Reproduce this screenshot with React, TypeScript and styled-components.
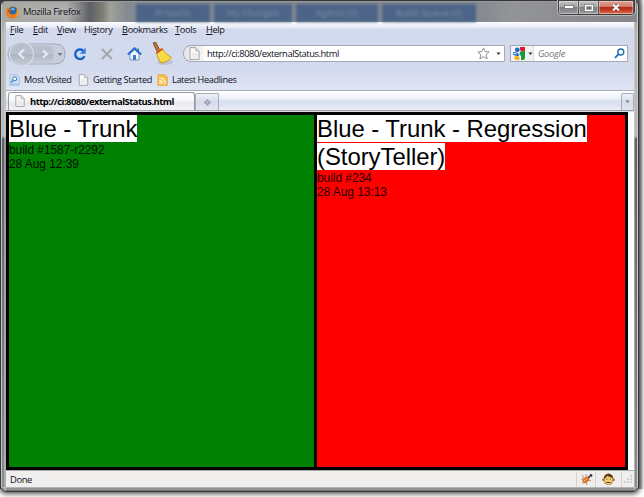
import React from "react";
import styled, { createGlobalStyle } from "styled-components";

const GlobalStyle = createGlobalStyle`
  html, body { margin: 0; padding: 0; }
  body { width: 644px; height: 497px; overflow: hidden; background: #fff; }
  * { box-sizing: border-box; }
`;

const Desktop = styled.div`
  width: 644px;
  height: 497px;
  overflow: hidden;
  background: linear-gradient(90deg, #30303a 0 7px, #555 7px 638px, #666 639px, #fff 644px);
  background-size: 100% 489px;
  background-repeat: no-repeat;
  font-family: "Open Sans", "Noto Sans", sans-serif;
  font-size: 9.4px;
  color: #101018;
`;

const Window = styled.div`
  width: 639px;
  height: 492px;
  display: flex;
  flex-direction: column;
  padding: 0 4px 4px 5px;
  border-radius: 6px;
  border: 1px solid #35363a;
  box-shadow: 0 1px 5px 1px #555;
  background:
    linear-gradient(90deg, #c4c4c4 0 1px, transparent 1px 3px, #d0d0d0 4px, transparent 5px),
    linear-gradient(270deg, #ccc 0 1px, transparent 1px 3px, #d8d8d8 3px, transparent 4px),
    linear-gradient(0deg, #777 0 1px, #8f9093 1px 3px, #d8d8d8 3px, transparent 4px),
    linear-gradient(180deg, #939496 0, #b6b9b1 36px, #b9b9b7 135px, #606165 138px, #8c8d8f 100%);
`;

const TitleBar = styled.header`
  height: 21px;
  flex: none;
  display: flex;
  align-items: center;
  margin: 0 -3px 0 -4px;
  padding-left: 4px;
  position: relative;
  border-top: 1px solid #999;
  border-radius: 5px 5px 0 0;
  background: linear-gradient(90deg, #a8a99f 0, #aaa 65px, #5e6064 88px, #7e8076 101px, #a1a398 108px, #858b92 124px, #858b92 480px, #939497 510px, #858789 100%);
`;

const TitleText = styled.span`
  position: relative;
  margin-left: 4px;
  line-height: 18px;
  letter-spacing: -0.38px;
  white-space: nowrap;
  text-shadow: 0 0 5px #ddd;
`;

const GlassTabs = styled.div`
  position: absolute;
  left: 134px;
  top: 2px;
  height: 18px;
  display: flex;
  gap: 4px;
  filter: blur(1.4px);
`;

const GlassTab = styled.span<{ $w: number }>`
  width: ${(p) => p.$w}px;
  height: 18px;
  text-align: center;
  line-height: 18px;
  color: #7586a0;
  background: #4c6487;
  font-size: 9px;
  font-weight: 600;
`;

const WindowButtons = styled.div`
  position: absolute;
  right: 2px;
  top: -2px;
  display: flex;
  width: 77px;
  height: 15px;
  border: 1px solid #3e3f42;
  border-radius: 0 0 4px 4px;
  overflow: hidden;
  box-shadow: 0 0 0 1px #b8b8b8;
`;

const WindowButton = styled.span<{ $close?: boolean }>`
  width: ${(p) => (p.$close ? 35 : 20.5)}px;
  display: flex;
  justify-content: center;
  align-items: center;
  border-right: 1px solid #555;
  box-shadow: inset 0 0 0 1px rgba(255, 255, 255, 0.35);
  background: ${(p) =>
    p.$close
      ? "linear-gradient(#e1a294 0, #cc7865 47%, #b32a15 50%, #c64328 75%, #df7757)"
      : "linear-gradient(#bfc0c1 0, #a1a2a4 47%, #7c7e81 50%, #999b9e)"};
`;

const Client = styled.div`
  flex: 1;
  min-height: 0;
  display: flex;
  flex-direction: column;
  background: #d3daed;
`;

const MenuBar = styled.nav`
  height: 17px;
  flex: none;
  display: flex;
  align-items: center;
  padding: 0 0 2px 4px;
  background: linear-gradient(#fdfdff 0, #edf0f9 4px, #e3e7f4 6px, #d4daed 7px);
`;

const MenuItem = styled.span<{ $w: number }>`
  width: ${(p) => p.$w}px;
  font-size: 9.2px;
  line-height: 15px;
  letter-spacing: -0.32px;
  white-space: nowrap;
  u { text-decoration-thickness: 1px; text-underline-offset: 1px; }
`;

const NavBar = styled.div`
  height: 30px;
  flex: none;
  display: flex;
  align-items: center;
  padding: 0 6px 1px 1px;
`;

const NavIcon = styled.span<{ $w: number }>`
  width: ${(p) => p.$w}px;
  display: flex;
  flex: none;
  justify-content: center;
`;

const AddressBox = styled.div`
  width: 322px;
  height: 17px;
  margin-left: 6px;
  flex: none;
  display: flex;
  align-items: center;
  padding: 0 0 0 5px;
  border: 1px solid #a4a8b3;
  border-radius: 8px 1px 1px 8px;
  background: linear-gradient(90deg, #e6e7ea 0, #f3f3f5 18px, #fff 21px);
`;

const AddressText = styled.span`
  flex: 1;
  margin-left: 7px;
  line-height: 15px;
  letter-spacing: -0.46px;
`;

const SearchBox = styled.div`
  width: 118px;
  height: 17px;
  margin-left: 5px;
  flex: none;
  display: flex;
  align-items: center;
  border: 1px solid #a4a8b3;
  background: #fff;
`;

const EngineButton = styled.span`
  width: 23px;
  height: 15px;
  display: flex;
  align-items: center;
  padding-left: 2px;
  gap: 3px;
  border-right: 1px solid #ddd;
  background: #f2f2f3;
`;

const Placeholder = styled.span`
  flex: 1;
  margin-left: 4px;
  color: #777;
  font-style: italic;
  line-height: 15px;
  letter-spacing: -0.3px;
`;

const BookmarkBar = styled.div`
  height: 21px;
  flex: none;
  display: flex;
  align-items: center;
  padding: 0 0 0 3px;
  background: linear-gradient(#d3daed, #e0e5f4);
`;

const Bookmark = styled.span<{ $w: number }>`
  width: ${(p) => p.$w}px;
  display: flex;
  align-items: center;
  gap: 4px;
  line-height: 15px;
  white-space: nowrap;
  font-size: 9.2px;
  letter-spacing: -0.4px;
`;

const TabStrip = styled.div`
  height: 21px;
  flex: none;
  display: flex;
  align-items: flex-end;
  border-top: 1px solid #a9adba;
  border-bottom: 1px solid #9b9fa9;
  background: linear-gradient(#fff 0, #edf0f8 8px, #d5dcee 10px, #e5e9f5 17px, #eef0f7);
`;

const Tab = styled.div`
  width: 187px;
  height: 18px;
  margin-left: 2px;
  padding: 0 0 1px 6px;
  display: flex;
  align-items: center;
  gap: 5px;
  border: 1px solid #979aa2;
  border-bottom: 0;
  border-radius: 3px 3px 0 0;
  background: linear-gradient(#fff 0, #f7f8fa 40%, #e9eaee 60%, #f3f3f5);
  color: #000;
  font-weight: 700;
  letter-spacing: -0.49px;
  white-space: nowrap;
`;

const SmallTab = styled.div<{ $end?: boolean }>`
  width: ${(p) => (p.$end ? 13 : 24)}px;
  height: 17px;
  margin-left: ${(p) => (p.$end ? "auto" : "0")};
  display: flex;
  align-items: center;
  justify-content: center;
  border: 1px solid #a8acb8;
  border-bottom: 0;
  border-radius: 2px 2px 0 0;
  background: linear-gradient(#edf0f8, #d6dbea 50%, #e1e5f1);
`;

const Viewport = styled.main`
  flex: 1;
  min-height: 0;
  display: flex;
  background: #fff;
  border-top: 1px solid #ddd;
`;

const Board = styled.div`
  width: 622px;
  display: grid;
  grid-template-columns: 305px 308px;
  gap: 3px;
  padding: 3px;
  background: #000;
`;

const BuildCell = styled.section<{ $passed: boolean }>`
  background: ${(p) => (p.$passed ? "#008000" : "#ff0000")};
  color: ${(p) => (p.$passed ? "#001000" : "#220000")};
  font-family: "Liberation Sans", Arial, sans-serif;
`;

const BuildName = styled.h1`
  margin: 0;
  color: #000;
  font-size: 23.9px;
  font-weight: 400;
  line-height: 28px;
  letter-spacing: -0.04px;
  span { background: #fff; }
`;

const BuildInfo = styled.div`
  font-size: 11.9px;
  line-height: 14px;
  letter-spacing: -0.02px;
`;

const StatusBar = styled.footer`
  height: 17px;
  flex: none;
  display: flex;
  align-items: center;
  border-top: 1px solid #aaa;
  padding-left: 4px;
  background: #f0eded;
  line-height: 15px;
`;

const StatusText = styled.span`
  flex: 1;
  letter-spacing: -0.4px;
`;

const StatusCell = styled.span<{ $w: number }>`
  width: ${(p) => p.$w}px;
  height: 15px;
  display: flex;
  align-items: center;
  justify-content: center;
  border-left: 1px solid #d4d1d1;
`;

const FirefoxIcon = () => (
  <svg width="13" height="13" viewBox="0 0 13 13">
    <circle cx="6.5" cy="6.5" r="6" fill="#df6614" />
    <circle cx="7" cy="5" r="4" fill="#2469ad" />
    <path d="M5 2.5c2-1 3 0 4 1L7 4.5 6 4z" fill="#70b9e4" />
    <path d="M.6 4 1.4 1.7 3 3.4l2.3.4-.5 1.4L3.5 6C4 8 6 9 8.4 8c2-.8 2.7-3 2-5.3 2.1 2 2.7 5 1 7.4-2 2.6-6.2 3-8.7.9C.5 9 .1 6.5.6 4" fill="#ee7c19" />
    <path d="M10.7 3c1.7 3 .9 6-1.5 7.6 2-.5 3.4-2.4 3.2-4.8-.1-1-.7-2.1-1.7-2.8" fill="#ffd342" />
    <path d="m1 3 2 1.5L5 5 3.5 6.2 4 8" fill="#a83a12" />
  </svg>
);

const PageIcon = ({ w = 10, h = 12 }: { w?: number; h?: number }) => (
  <svg width={w} height={h} viewBox="0 0 10 12">
    <path d="M.8.6h5.4l3 3v7.8H.8z" fill="#f8f8f8" stroke="#94979b" strokeWidth=".8" />
    <path d="M6.2.6v3h3" fill="#ddd" stroke="#a9abae" strokeWidth=".8" />
    <path d="M2.2 6 7.9 5v5.3H2.2z" fill="#ececec" />
  </svg>
);

const BackForward = () => (
  <svg width="59" height="26" viewBox="0 0 59 26">
    <defs>
      <linearGradient id="nav" x2="0" y2="1">
        <stop stopColor="#b8bfcc" /><stop offset=".48" stopColor="#bac1ce" />
        <stop offset=".52" stopColor="#aeb5c2" /><stop offset="1" stopColor="#c6ccd7" />
      </linearGradient>
    </defs>
    <path d="M8 3h40q10 0 10 10t-10 10H8Q1 20 1 13T8 3" fill="#c6cede" stroke="#a0a8b8" />
    <path d="M20 4h20q7 0 7 9t-7 9H20z" fill="url(#nav)" stroke="#c9cfda" />
    <circle cx="14.5" cy="13" r="12" fill="url(#nav)" stroke="#d5dbe7" strokeWidth="1.3" />
    <path d="m17 8.5-4.8 4.5 4.8 4.5M36 9.5l4 3.5-4 3.5" fill="none" stroke="#e8ebf1" strokeWidth="2.2" />
    <path d="M50.5 12h5L53 15z" fill="#747b87" />
  </svg>
);

const ReloadIcon = () => (
  <svg width="14" height="14" viewBox="0 0 14 14">
    <path d="M11.4 9.1A4.8 4.8 0 1 1 10 3.5" fill="none" stroke="#1762d0" strokeWidth="2.4" />
    <path d="M12.7.8v6H6.9z" fill="#2878df" />
  </svg>
);

const StopIcon = () => (
  <svg width="14" height="14" viewBox="0 0 14 14">
    <path d="m2 2 10 10M12 2 2 12" stroke="#a6a8ad" strokeWidth="2.3" />
  </svg>
);

const HomeIcon = () => (
  <svg width="15" height="14" viewBox="0 0 15 14">
    <path d="M3 6.7 7.5 2.8 12 6.7v6.2H3z" fill="#eef6ff" stroke="#5480b7" strokeWidth=".8" />
    <path d="M6 8h3v5H6z" fill="#3979ce" />
    <path d="m.9 7.5 6.6-6.2 6.6 6.2" fill="none" stroke="#286ecb" strokeWidth="2.1" />
    <path d="M10.3 1.5H12V5l-1.7-1.5" fill="#3476c7" />
  </svg>
);

const BroomIcon = () => (
  <svg width="22" height="24" viewBox="0 0 22 24">
    <ellipse cx="13" cy="20" rx="8" ry="3" fill="#b0b6c3" opacity=".6" />
    <path d="m2.8 1.6 3.6 7" stroke="#704420" strokeWidth="3.6" strokeLinecap="round" />
    <path d="m2.8 1.6 3.6 7" stroke="#c47d37" strokeWidth="2" strokeLinecap="round" />
    <path d="m4.3 9.8 5.6-3.6q3.5 5.6 9.6 9.4-4 4.8-10.6 5.5Q5 16 4.3 9.8" fill="#f6d22d" stroke="#b98d16" strokeWidth=".7" />
    <path d="m6 11.2 4.6 8.6M8 10.2l6 8.6M9.5 9l7 8.2" stroke="#fff08a" strokeWidth=".8" />
    <path d="m4.3 11 6.4-4.1" stroke="#d64030" strokeWidth="1.5" />
  </svg>
);

const StarIcon = () => (
  <svg width="13" height="13" viewBox="0 0 13 13">
    <path d="m6.5.9 1.7 3.7 4 .4-3 2.7.9 4.1-3.6-2.1-3.6 2.1.9-4.1L.8 5l4-.4z" fill="#fff" stroke="#8d8f94" />
  </svg>
);

const Arrow = ({ light = false }: { light?: boolean }) => (
  <svg width="5" height="4" viewBox="0 0 5 4"><path d="M.5.5h4L2.5 3z" fill={light ? "#777" : "#333"} /></svg>
);

const GoogleIcon = () => (
  <svg width="12" height="13" viewBox="0 0 12 13">
    <rect width="12" height="13" rx="1" fill="#f8f8f8" />
    <path d="M7 0h5v4L9.3 5 7 3z" fill="#e51b23" />
    <path d="M7.2 4.6 12 4v7q0 2-2 2H8V9L6.4 7z" fill="#17993b" />
    <path d="M1 10q3-2 5.5.3V13H2.5Q1 12 1 10" fill="#f5b51a" />
    <circle cx="4.3" cy="2.8" r="2.4" fill="#2267ce" />
    <path d="m0 5 4 .5L6.5 8 5 9.3 0 8z" fill="#2166ce" />
    <path d="M.5 6.7h3" stroke="#fff" />
  </svg>
);

const SearchIcon = () => (
  <svg width="11" height="11" viewBox="0 0 11 11">
    <circle cx="6.8" cy="4" r="3" fill="#f8fcff" stroke="#246da9" strokeWidth="1.4" />
    <path d="M4.6 6.2 1 9.8" stroke="#246da9" strokeWidth="1.8" />
  </svg>
);

const VisitedIcon = () => (
  <svg width="11" height="12" viewBox="0 0 11 12">
    <path d="M1 .7h7l2.3 2.4v8.3H.7z" fill="#c9dff3" stroke="#9dbbdb" strokeWidth=".8" />
    <circle cx="5.7" cy="4.8" r="2" fill="#eaf6ff" stroke="#3b78b8" />
    <path d="M4.2 6.4 2 8.6" stroke="#3b78b8" strokeWidth="1.3" />
    <path d="M.5 9.3h10v2.2H.5z" fill="#a5ccef" />
  </svg>
);

const FeedIcon = () => (
  <svg width="11" height="12" viewBox="0 0 11 12">
    <path d="M1 .7h7l2.3 2.4v8.3H.7z" fill="#f6c04a" stroke="#e2a550" strokeWidth=".8" />
    <path d="M2.3 6.7q3 0 3 3M2.3 4q5.7 0 5.7 5.7" fill="none" stroke="#fff8ea" strokeWidth="1.2" />
    <circle cx="2.9" cy="9.1" r=".9" fill="#fff8ea" />
  </svg>
);

const PlusIcon = () => (
  <svg width="7" height="7" viewBox="0 0 7 7"><path d="M3.5.5v6M.5 3.5h6" stroke="#7d828e" strokeWidth="1.8" /><path d="M3.5 1.5v4M1.5 3.5h4" stroke="#e5e9f1" strokeWidth=".5" /></svg>
);

const BugIcon = () => (
  <svg width="13" height="13" viewBox="0 0 13 13">
    <path d="m2 2 2 3M6 1v4M1 6h3M2 11l2-2M7 12 6 9M11 8 8 7" stroke="#b79173" />
    <ellipse cx="5.8" cy="7" rx="3.7" ry="2.6" transform="rotate(-38 5.8 7)" fill="#d87531" />
    <path d="m4 8 3-2" stroke="#f7bd83" />
    <circle cx="9" cy="4" r="1.2" fill="#7b4c37" /><circle cx="11" cy="2.5" r="1.4" fill="#333849" />
  </svg>
);

const MonkeyIcon = () => (
  <svg width="13" height="13" viewBox="0 0 13 13">
    <ellipse cx="6.5" cy="6.2" rx="4.9" ry="5.6" fill="#623410" />
    <circle cx="1.5" cy="6.8" r="1.3" fill="#a7651d" /><circle cx="11.5" cy="6.8" r="1.3" fill="#a7651d" />
    <path d="M2.4 5.5Q4.5 4.5 5.3 2.8 8 4 10.6 5v4q-4 5.5-8.2 0z" fill="#efc965" />
    <path d="M3.7 5.4h2v2h-2zM7.3 5.4h2v2h-2z" fill="#fffbe8" />
    <path d="M4.8 5.6v1.6M8.2 5.6v1.6M4.4 9.5h4.2" fill="none" stroke="#593715" strokeWidth=".9" />
  </svg>
);

const GripIcon = () => (
  <svg width="9" height="9" viewBox="0 0 9 9">
    <path d="M6 0h2v2H6zM6 3h2v2H6zM6 6h2v2H6zM3 3h2v2H3zM3 6h2v2H3zM0 6h2v2H0z" fill="#d0cece" />
  </svg>
);

const menus = [
  { before: "", key: "F", after: "ile", width: 23 },
  { before: "", key: "E", after: "dit", width: 24 },
  { before: "", key: "V", after: "iew", width: 27 },
  { before: "Hi", key: "s", after: "tory", width: 38 },
  { before: "", key: "B", after: "ookmarks", width: 53 },
  { before: "", key: "T", after: "ools", width: 31 },
  { before: "", key: "H", after: "elp", width: 25 },
];

const builds = [
  { name: "Blue - Trunk", build: "build #1587-r2292", date: "28 Aug 12:39", passed: true },
  { name: "Blue - Trunk - Regression (StoryTeller)", build: "build #234", date: "28 Aug 13:13", passed: false },
];

export default function App() {
  return (
    <Desktop>
      <GlobalStyle />
      <Window>
        <TitleBar>
          <GlassTabs>
            <GlassTab $w={74}>Projects</GlassTab>
            <GlassTab $w={78}>My Changes</GlassTab>
            <GlassTab $w={82}>Agents (2)</GlassTab>
            <GlassTab $w={94}>Build Queue (0)</GlassTab>
          </GlassTabs>
          <FirefoxIcon />
          <TitleText>Mozilla Firefox</TitleText>
          <WindowButtons>
            <WindowButton>
              <svg width="10" height="5"><rect x=".5" y=".5" width="9" height="3" fill="#fff" stroke="#555" strokeWidth=".6" /></svg>
            </WindowButton>
            <WindowButton>
              <svg width="10" height="8"><rect x="1.5" y="1.5" width="7" height="5" fill="none" stroke="#555" strokeWidth="2.6" /><rect x="1.5" y="1.5" width="7" height="5" fill="#777" stroke="#fff" strokeWidth="1.6" /></svg>
            </WindowButton>
            <WindowButton $close>
              <svg width="10" height="9"><path d="m2 1.5 6 6M8 1.5l-6 6" stroke="#64333a" strokeWidth="3" /><path d="m2 1.5 6 6M8 1.5l-6 6" stroke="#fff" strokeWidth="2" /></svg>
            </WindowButton>
          </WindowButtons>
        </TitleBar>
        <Client>
          <MenuBar>
            {menus.map((m) => (
              <MenuItem key={m.key} $w={m.width}>{m.before}<u>{m.key}</u>{m.after}</MenuItem>
            ))}
          </MenuBar>
          <NavBar>
            <NavIcon $w={59}><BackForward /></NavIcon>
            <NavIcon $w={28}><ReloadIcon /></NavIcon>
            <NavIcon $w={26}><StopIcon /></NavIcon>
            <NavIcon $w={29}><HomeIcon /></NavIcon>
            <NavIcon $w={28}><BroomIcon /></NavIcon>
            <AddressBox>
              <PageIcon w={11} h={13} />
              <AddressText>http://ci:8080/externalStatus.html</AddressText>
              <NavIcon $w={20}><StarIcon /></NavIcon>
              <NavIcon $w={11}><Arrow /></NavIcon>
            </AddressBox>
            <SearchBox>
              <EngineButton><GoogleIcon /><Arrow /></EngineButton>
              <Placeholder>Google</Placeholder>
              <NavIcon $w={15}><SearchIcon /></NavIcon>
            </SearchBox>
          </NavBar>
          <BookmarkBar>
            <Bookmark $w={69}><VisitedIcon />Most Visited</Bookmark>
            <Bookmark $w={79}><PageIcon w={11} />Getting Started</Bookmark>
            <Bookmark $w={90}><FeedIcon />Latest Headlines</Bookmark>
          </BookmarkBar>
          <TabStrip>
            <Tab><PageIcon w={10} h={12} />http://ci:8080/externalStatus.html</Tab>
            <SmallTab><PlusIcon /></SmallTab>
            <SmallTab $end><Arrow light /></SmallTab>
          </TabStrip>
          <Viewport>
            <Board>
              {builds.map((b) => (
                <BuildCell key={b.name} $passed={b.passed}>
                  <BuildName><span>{b.name}</span></BuildName>
                  <BuildInfo>{b.build}</BuildInfo>
                  <BuildInfo>{b.date}</BuildInfo>
                </BuildCell>
              ))}
            </Board>
          </Viewport>
          <StatusBar>
            <StatusText>Done</StatusText>
            <StatusCell $w={19}><BugIcon /></StatusCell>
            <StatusCell $w={26}><MonkeyIcon /></StatusCell>
            <StatusCell $w={13}><GripIcon /></StatusCell>
          </StatusBar>
        </Client>
      </Window>
    </Desktop>
  );
}
